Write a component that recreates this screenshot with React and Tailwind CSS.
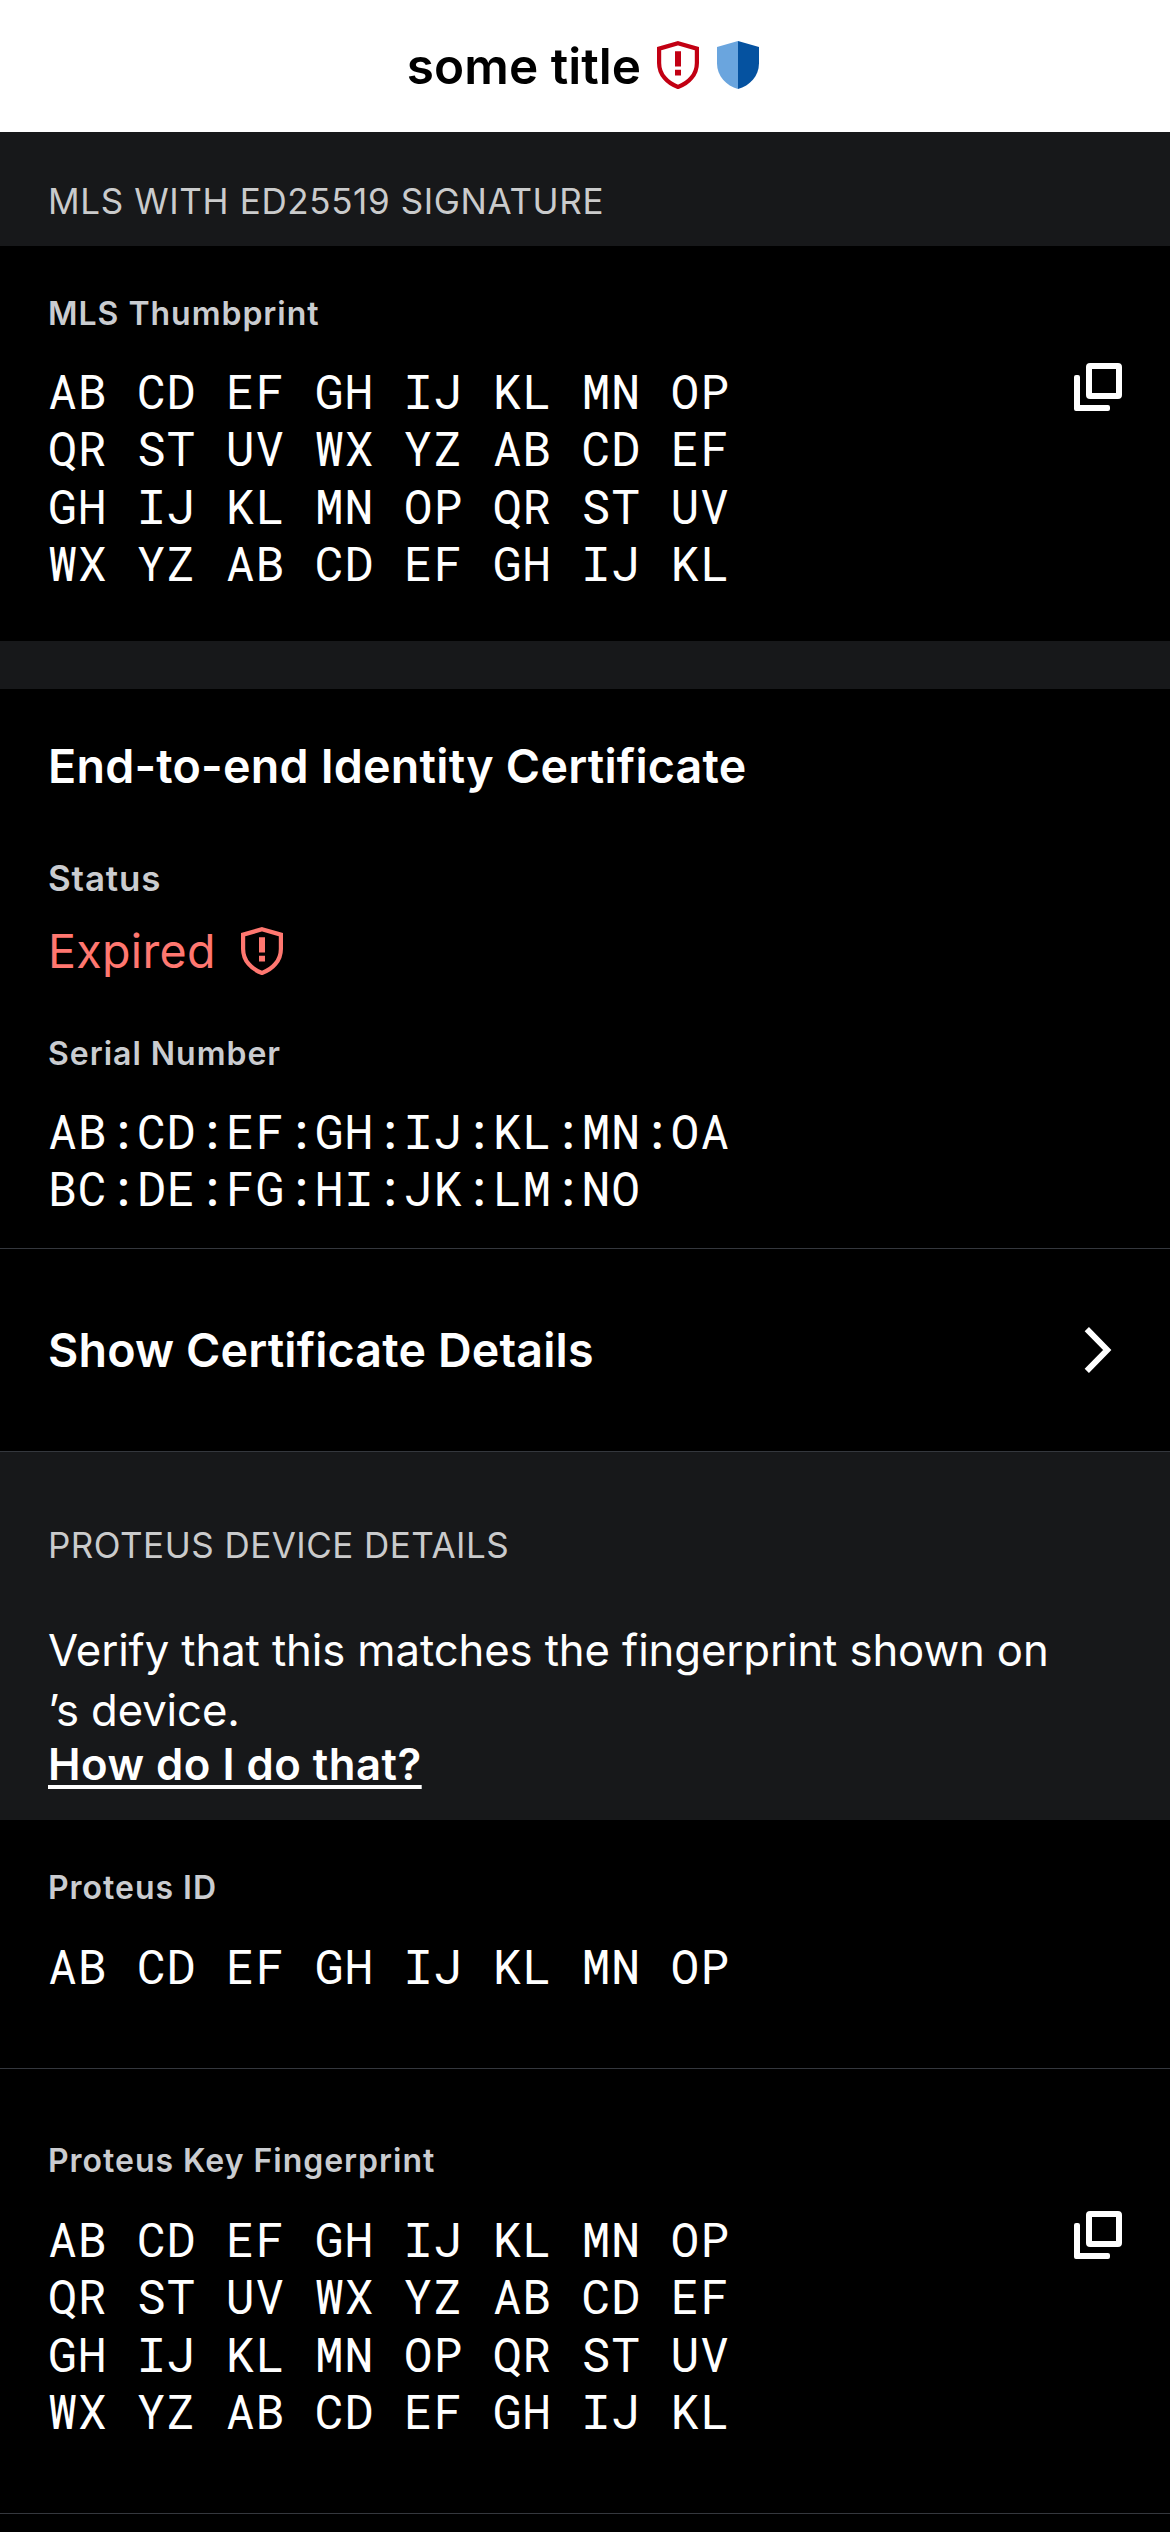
const THUMBPRINT = [
  "AB CD EF GH IJ KL MN OP",
  "QR ST UV WX YZ AB CD EF",
  "GH IJ KL MN OP QR ST UV",
  "WX YZ AB CD EF GH IJ KL",
];
const SERIAL = ["AB:CD:EF:GH:IJ:KL:MN:OA", "BC:DE:FG:HI:JK:LM:NO"];

function ExpiredShield({ className }) {
  return (
    <svg viewBox="0 0 14 16" fill="none" className={`h-12 w-[42px] shrink-0 ${className}`}>
      <path
        d="M7 .74 13.3 2.55V7.3C13.3 11.2 10.5 14.1 7 15.3 3.5 14.1 .7 11.2 .7 7.3V2.55Z"
        stroke="currentColor"
        strokeWidth="1.4"
      />
      <path d="M6 3.4H8V8.5H6ZM6 9.6H8V11.5H6Z" fill="currentColor" />
    </svg>
  );
}

function VerifiedShield() {
  return (
    <svg viewBox="0 0 14 16" className="h-12 w-[42px] shrink-0">
      <path d="M7 0 0 2V7.4C0 11.7 3.1 14.9 7 16Z" fill="#6aa5de" />
      <path d="M7 0 14 2V7.4C14 11.7 10.9 14.9 7 16Z" fill="#0552a0" />
    </svg>
  );
}

function CopyIcon() {
  return (
    <svg viewBox="0 0 16 16" className="h-12 w-12 shrink-0" fill="none" stroke="#fff" strokeWidth="2">
      <rect x="5" y="1" width="10" height="10" rx=".35" />
      <path
        d="M.67 4H1.33A.67 .67 0 0 1 2 4.67V14H11.33A.67 .67 0 0 1 12 14.67V15.33A.67 .67 0 0 1 11.33 16H.67A.67 .67 0 0 1 0 15.33V4.67A.67 .67 0 0 1 .67 4Z"
        fill="#fff"
        stroke="none"
      />
    </svg>
  );
}

function Chevron() {
  return (
    <svg viewBox="0 0 28 48" className="h-12 w-7 shrink-0" fill="none" stroke="#fff" strokeWidth="6">
      <path d="M2.8 3.1 23.2 24 2.8 44.9" />
    </svg>
  );
}

function Label({ children }) {
  return (
    <h3 className="text-[32px] leading-10 font-semibold tracking-[0.98px] text-[#caccd0]">{children}</h3>
  );
}

function SectionTitle({ children, className }) {
  return <h2 className={`text-[35px] leading-[42px] text-[#cacbcc] ${className}`}>{children}</h2>;
}

function MonoLines({ lines }) {
  return (
    <div className="font-['Roboto_Mono','Liberation_Mono',monospace] text-[48px] leading-[57.3px] tracking-[0.84px] whitespace-pre">
      {lines.map((line, i) => (
        <p key={i}>{line}</p>
      ))}
    </div>
  );
}

export default function App() {
  return (
    <div className="h-[2532px] w-[1170px] overflow-hidden bg-black font-['Inter',sans-serif] text-white">
      <header className="flex h-[132px] items-start justify-center bg-white pt-9 pr-1 text-black">
        <h1 className="text-[49.5px] leading-[60px] font-semibold tracking-[0.04px]">some title</h1>
        <div className="flex gap-[18px] pt-[5px] pl-4">
          <ExpiredShield className="text-[#c20013]" />
          <VerifiedShield />
        </div>
      </header>

      <div className="h-[114px] bg-[#17181a] px-12 pt-12">
        <SectionTitle className="tracking-[0.63px]">MLS WITH ED25519 SIGNATURE</SectionTitle>
      </div>

      <section className="h-[395px] px-12 pt-12">
        <Label>MLS Thumbprint</Label>
        <div className="flex items-start justify-between pt-7">
          <MonoLines lines={THUMBPRINT} />
          <div className="pt-px">
            <CopyIcon />
          </div>
        </div>
      </section>

      <div className="h-12 bg-[#17181a]" />

      <section className="h-[560px] border-b border-[#34373d] px-12 pt-[49px]">
        <h2 className="text-[46.6px] leading-14 font-semibold tracking-[0.21px]">
          End-to-end Identity Certificate
        </h2>
        <h3 className="pt-16 text-[34.9px] leading-10 font-semibold tracking-[0.87px] text-[#caccd0]">
          Status
        </h3>
        <div className="flex items-start gap-[25px] pt-[25px] text-[#ff7770]">
          <p className="text-[46.6px] leading-14 tracking-[0.3px]">Expired</p>
          <ExpiredShield className="mt-1" />
        </div>
        <div className="pt-[55px]">
          <Label>Serial Number</Label>
        </div>
        <div className="pt-7">
          <MonoLines lines={SERIAL} />
        </div>
      </section>

      <button className="flex h-[203px] w-full items-center justify-between border-b border-[#34373d] pr-[58px] pl-12 text-left">
        <span className="text-[46.6px] leading-14 font-semibold tracking-[0.15px]">Show Certificate Details</span>
        <Chevron />
      </button>

      <section className="h-[368px] bg-[#17181a] px-12 pt-[72px]">
        <SectionTitle className="tracking-[0.48px]">PROTEUS DEVICE DETAILS</SectionTitle>
        <p className="pt-[55px] text-[43.7px] leading-[59.7px] tracking-[-0.12px]">
          Verify that this matches the fingerprint shown on
          <br />
          ’s device.
        </p>
        <a className="block text-[43.7px] leading-[50px] font-semibold tracking-[0.48px] underline decoration-4 underline-offset-[5px] [text-decoration-skip-ink:none]">
          How do I do that?
        </a>
      </section>

      <section className="h-[249px] border-b border-[#34373d] px-12 pt-12">
        <Label>Proteus ID</Label>
        <div className="pt-[29px]">
          <MonoLines lines={THUMBPRINT.slice(0, 1)} />
        </div>
      </section>

      <section className="h-[445px] border-b border-[#34373d] px-12 pt-[72px]">
        <Label>Proteus Key Fingerprint</Label>
        <div className="flex items-start justify-between pt-[29px]">
          <MonoLines lines={THUMBPRINT} />
          <div className="pt-px">
            <CopyIcon />
          </div>
        </div>
      </section>
    </div>
  );
}
